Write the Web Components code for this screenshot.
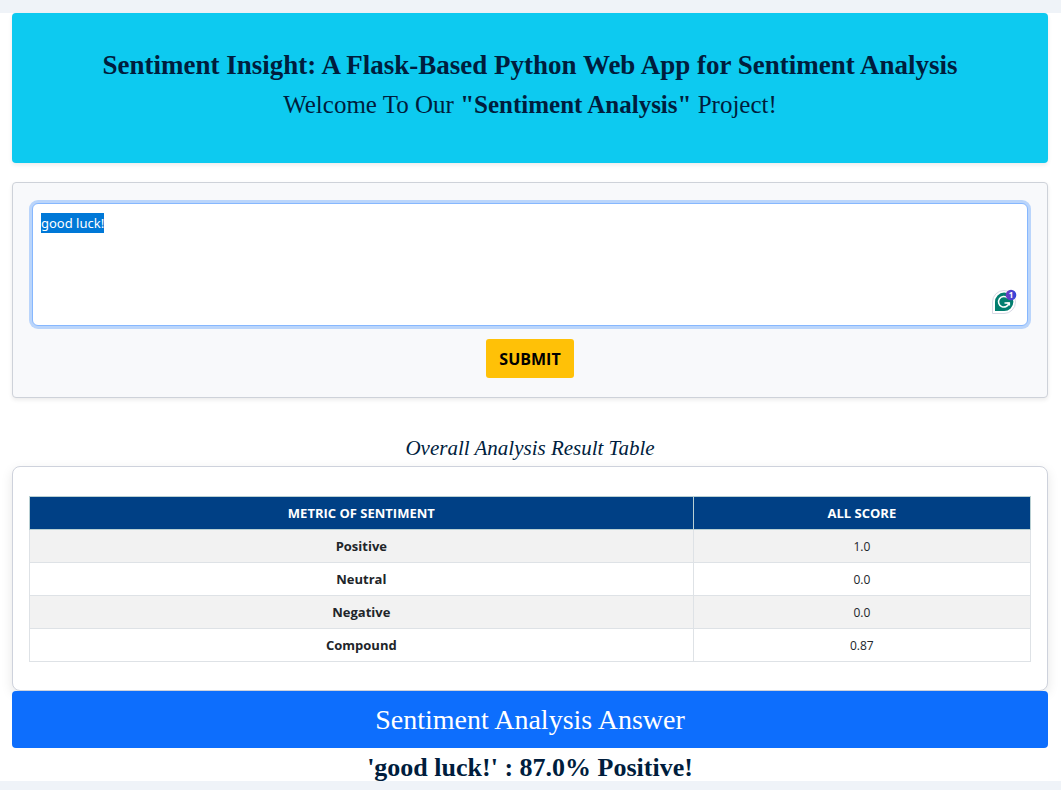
<!DOCTYPE html>
<html lang="en">
<head>
<meta charset="utf-8">
<meta name="viewport" content="width=device-width, initial-scale=1">
<title>Sentiment Insight</title>
<style>
  html { background: #eff3f8; }
  body {
    margin: 0;
    padding: 13px 0 9px;
    color: #001d3d;
    font-family: "Open Sans", "Noto Sans", sans-serif;
    --serif: Georgia, "Liberation Serif", serif;
  }
</style>
</head>
<body>
<sentiment-app></sentiment-app>
<script>
const define = (name, html, setup) => {
  const template = document.createElement('template');
  template.innerHTML = html;
  customElements.define(name, class extends HTMLElement {
    connectedCallback() {
      if (this.shadowRoot) return;
      this.attachShadow({ mode: 'open' }).append(template.content.cloneNode(true));
      if (setup) setup(this, this.shadowRoot);
    }
  });
};

define('hero-banner', `
  <style>
    :host { display: block; box-sizing: border-box; padding: 32px 16px 38px; background: #0dcaf0; border-radius: 4px; box-shadow: 0 2px 4px rgba(0,0,0,.08); text-align: center; font-family: var(--serif); }
    h1, p { margin: 0; line-height: 40px; }
    h1 { font-size: 27px; font-weight: 700; }
    p { font-size: 25px; }
  </style>
  <h1><slot name="title"></slot></h1>
  <p><slot></slot></p>`);

define('writing-assistant', `
  <style>
    :host { display: block; width: 24px; height: 25px; }
    svg { display: block; overflow: visible; }
    text { font: 700 8px "Open Sans", sans-serif; fill: #fff; }
  </style>
  <svg width="24" height="25" viewBox="0 0 24 25" aria-hidden="true">
    <defs><linearGradient id="g"><stop stop-color="#703ac1"/><stop offset="1" stop-color="#3147db"/></linearGradient></defs>
    <path d="M.5 24.5V13A11.5 11.5 0 1 1 12 24.5Z" fill="#fff" stroke="#d8d9e5"/>
    <path d="M3 22V13a9.2 9.2 0 1 1 9 9Z" fill="#027e6f"/>
    <path d="M15.6 9A5.3 5.3 0 1 0 17 14H12.5" fill="none" stroke="#fff" stroke-width="1.5"/>
    <path d="M14.5 14H17.5V16.5" fill="none" stroke="#fff" stroke-width="1.2"/>
    <circle cx="19" cy="6" r="5.3" fill="url(#g)"/>
    <text x="19" y="9" text-anchor="middle">1</text>
  </svg>`);

define('sentiment-form', `
  <style>
    :host { display: block; box-sizing: border-box; padding: 20px 19px 19px; background: #f8f9fb; border: 1px solid #ced2d9; border-radius: 4px; box-shadow: 0 2px 4px rgba(0,0,0,.08); }
    form { display: flex; flex-direction: column; align-items: center; gap: 13px; margin: 0; }
    .field { position: relative; width: 100%; }
    textarea { display: block; box-sizing: border-box; width: 100%; height: 123px; margin: 0; padding: 9px 8px; border: 1px solid #86b7fe; border-radius: 6px; outline: 0; box-shadow: 0 0 0 3px #bad5fb; background: #fff; color: #212529; font: 13px/20px "Noto Sans", "Open Sans", sans-serif; resize: none; }
    textarea::selection { background: #0078d7; color: #fff; }
    writing-assistant { position: absolute; right: 12px; bottom: 12px; }
    button { height: 39px; padding: 0 13px; border: 0; border-radius: 3px; background: #ffc107; color: #000; font: 700 16px/24px "Open Sans", sans-serif; }
  </style>
  <form>
    <div class="field">
      <textarea aria-label="Text to analyse" spellcheck="false">good luck!</textarea>
      <writing-assistant></writing-assistant>
    </div>
    <button type="submit">SUBMIT</button>
  </form>`, (host, root) => {
    root.querySelector('form').addEventListener('submit', e => e.preventDefault());
    const box = root.querySelector('textarea');
    box.focus();
    box.select();
  });

define('score-table', `
  <style>
    :host { display: block; box-sizing: border-box; padding: 29px 16px 28px; background: #fff; border: 1px solid #ced2dc; border-radius: 8px; box-shadow: 0 4px 12px rgba(0,0,0,.1); }
    table { width: 100%; border-collapse: collapse; table-layout: fixed; color: #212529; line-height: 20px; text-align: center; }
    col:first-child { width: 66.3%; }
    th, td { box-sizing: border-box; height: 33px; border: 1px solid #dee2e6; }
    th { padding: 6px; font-size: 13px; font-weight: 700; }
    td { padding: 7px 6px 5px; font-size: 12px; }
    thead th { background: #004085; color: #fff; border-color: #b9d0d3; }
    tbody tr:nth-child(odd) { background: #f2f2f2; }
  </style>
  <table>
    <colgroup><col><col></colgroup>
    <thead><tr><th scope="col">METRIC OF SENTIMENT</th><th scope="col">ALL SCORE</th></tr></thead>
    <tbody></tbody>
  </table>`, (host, root) => {
    const body = root.querySelector('tbody');
    for (const [name, score] of JSON.parse(host.getAttribute('scores'))) {
      const row = body.insertRow();
      const head = document.createElement('th');
      head.scope = 'row';
      head.textContent = name;
      row.append(head);
      row.insertCell().textContent = score;
    }
  });

define('answer-panel', `
  <style>
    :host { display: block; position: relative; font-family: var(--serif); text-align: center; }
    h2, p { margin: 0; }
    h2 { padding: 8px; border-radius: 4px; background: #0d6efd; color: #fff; font-size: 28px; font-weight: 400; line-height: 41px; }
    p { padding-top: 6px; font-size: 26px; font-weight: 700; line-height: 27px; }
  </style>
  <h2><slot name="title"></slot></h2>
  <p><slot></slot></p>`);

define('sentiment-app', `
  <style>
    :host { display: block; padding: 0 13px 0 12px; background: #fff; }
    sentiment-form { margin-top: 19px; }
    h2 { margin: 36px 0 4px; font: italic 400 21px/28px var(--serif); text-align: center; }
  </style>
  <hero-banner>
    <span slot="title">Sentiment Insight: A Flask-Based Python Web App for Sentiment Analysis</span>
    Welcome To Our <b>"Sentiment Analysis"</b> Project!
  </hero-banner>
  <sentiment-form></sentiment-form>
  <h2>Overall Analysis Result Table</h2>
  <score-table scores='[["Positive","1.0"],["Neutral","0.0"],["Negative","0.0"],["Compound","0.87"]]'></score-table>
  <answer-panel>
    <span slot="title">Sentiment Analysis Answer</span>
    'good luck!' : 87.0% Positive!
  </answer-panel>`);
</script>
</body>
</html>
